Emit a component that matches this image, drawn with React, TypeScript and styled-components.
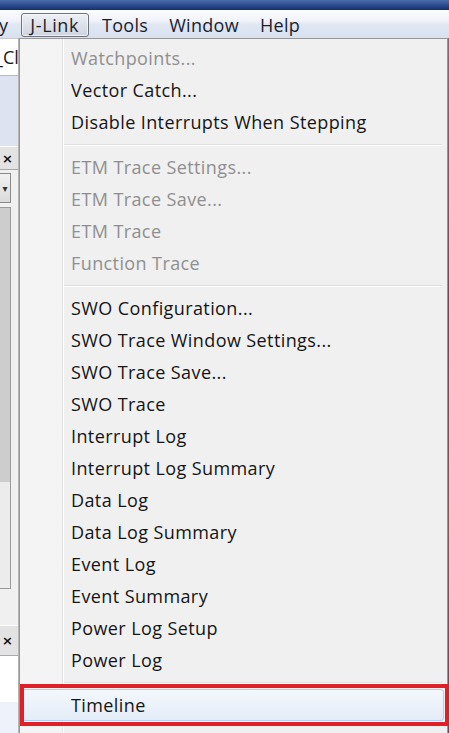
import React from "react";
import styled, { createGlobalStyle, css } from "styled-components";

const Global = createGlobalStyle`
  html, body { margin: 0; padding: 0; background: #f0f0f0; }
  body { font-family: "Open Sans", "Noto Sans", sans-serif; }
`;

const Screen = styled.div`
  width: 449px;
  height: 733px;
  overflow: hidden;
  display: flex;
  flex-direction: column;
  background: #f0f0f0;
  font-family: "Open Sans", "Noto Sans", sans-serif;
`;

const TitleStrip = styled.div`
  flex: none;
  height: 9px;
  background: linear-gradient(#4d6cab, #2a4a8c 60%, #1d3873);
`;

const MenuBar = styled.div`
  flex: none;
  box-sizing: border-box;
  height: 29px;
  padding-bottom: 1px;
  display: flex;
  align-items: flex-end;
  gap: 5px;
  border-top: 1px solid #18305f;
  background: linear-gradient(#fbfcfe 0%, #f0f3f9 38%, #e0e7f3 52%, #d9e1ef 100%);
`;

const BarItem = styled.div<{ $active?: boolean; $cut?: boolean }>`
  box-sizing: border-box;
  height: 24px;
  display: flex;
  align-items: center;
  padding: 0 7px;
  border: 1px solid transparent;
  border-radius: 3px;
  font-size: 18px;
  letter-spacing: 0.3px;
  color: #1c1d2b;
  white-space: nowrap;
  ${(p) =>
    p.$cut &&
    css`
      padding-left: 0;
      margin-left: -2px;
    `}
  ${(p) =>
    p.$active &&
    css`
      padding: 0 9px 0 8px;
      letter-spacing: 0.6px;
      border-color: #6e737d;
      background: linear-gradient(#eef1f6, #dde2ea 50%, #cfd5df);
      box-shadow: inset 0 0 0 1px rgba(255, 255, 255, 0.6);
    `}
`;

const Body = styled.div`
  flex: 1;
  min-height: 0;
  display: flex;
`;

const LeftPanel = styled.div`
  flex: none;
  box-sizing: border-box;
  width: 19px;
  display: flex;
  flex-direction: column;
  border-right: 1px solid #b4b4b4;
  background: #f0f0f0;
  overflow: hidden;
`;

const NameField = styled.div`
  flex: none;
  height: 38px;
  box-sizing: border-box;
  border-top: 1px solid #c9c9c9;
  border-bottom: 1px solid #b9b9b9;
  background: #ffffff;
  display: flex;
  align-items: center;
  font-size: 18px;
  color: #1a1a1a;
  white-space: nowrap;
  & > span {
    margin-left: -5px;
  }
`;

const Lavender = styled.div`
  flex: none;
  height: 70px;
  background: #dee3f1;
`;

const PaneHeader = styled.div<{ $h: number }>`
  flex: none;
  box-sizing: border-box;
  height: ${(p) => p.$h}px;
  display: flex;
  align-items: center;
  padding-left: 2px;
  border-top: 1px solid #ffffff;
  border-bottom: 1px solid #a9a9a9;
  background: #e3e3e3;
  font-family: "DejaVu Sans", sans-serif;
  font-weight: bold;
  font-size: 13px;
  color: #111;
`;

const Combo = styled.div`
  flex: none;
  box-sizing: border-box;
  height: 30px;
  margin-top: 3px;
  width: 11px;
  border: 1px solid #8a8a8a;
  border-left: none;
  background: linear-gradient(#f2f2f2, #dadada);
  display: flex;
  align-items: center;
  justify-content: center;
  font-size: 10px;
  color: #333;
  font-family: "DejaVu Sans", sans-serif;
`;

const ListBox = styled.div`
  flex: none;
  box-sizing: border-box;
  height: 382px;
  margin-top: 4px;
  width: 11px;
  border: 1px solid #9a9a9a;
  border-left: none;
  background: linear-gradient(#cdcdcd 0, #cdcdcd 72%, #ececec 72%);
`;

const Spacer = styled.div<{ $h: number }>`
  flex: none;
  height: ${(p) => p.$h}px;
`;

const WhiteArea = styled.div`
  flex: 1;
  background: linear-gradient(#ffffff 0, #ffffff 60%, #eef2fa 60%);
`;

const Menu = styled.div`
  flex: none;
  box-sizing: border-box;
  width: 429px;
  padding: 3px 3px 0 2px;
  border: 1px solid #979797;
  border-bottom: none;
  display: flex;
  flex-direction: column;
  background: linear-gradient(
    to right,
    #f4f4f4 0,
    #f4f4f4 42px,
    #e1e2e2 42px,
    #e1e2e2 43px,
    #ffffff 43px,
    #ffffff 44px,
    #f0f0f0 44px
  );
`;

const Item = styled.div<{ $disabled?: boolean; $hot?: boolean }>`
  position: relative;
  flex: none;
  box-sizing: border-box;
  height: 32px;
  display: flex;
  align-items: center;
  padding-left: 48px;
  border: 1px solid transparent;
  border-radius: 3px;
  font-size: 18px;
  letter-spacing: 0.4px;
  white-space: nowrap;
  color: ${(p) => (p.$disabled ? "#8f8f8f" : "#151515")};
  ${(p) =>
    p.$hot &&
    css`
      border-color: #b3d0ee;
      background: linear-gradient(#f4f8fd, #e3ecf7);
    `}
`;

const Annotation = styled.span`
  position: absolute;
  top: -6px;
  bottom: -6px;
  left: -3px;
  right: -6px;
  border: 4px solid #e01f27;
  pointer-events: none;
`;

const Separator = styled.div`
  flex: none;
  height: 13px;
  display: flex;
  align-items: center;
  padding-left: 42px;
  margin-right: 2px;
  &::before {
    content: "";
    flex: 1;
    height: 0;
    border-top: 1px solid #e0e0e0;
    border-bottom: 1px solid #ffffff;
  }
`;

const RightStrip = styled.div`
  flex: 1;
  background: linear-gradient(#6b7384, #4c5666 40%, #5e6a5c 70%, #4a5470);
`;

type Entry = { label: string; disabled?: boolean } | "sep";

const entries: Entry[] = [
  { label: "Watchpoints...", disabled: true },
  { label: "Vector Catch..." },
  { label: "Disable Interrupts When Stepping" },
  "sep",
  { label: "ETM Trace Settings...", disabled: true },
  { label: "ETM Trace Save...", disabled: true },
  { label: "ETM Trace", disabled: true },
  { label: "Function Trace", disabled: true },
  "sep",
  { label: "SWO Configuration..." },
  { label: "SWO Trace Window Settings..." },
  { label: "SWO Trace Save..." },
  { label: "SWO Trace" },
  { label: "Interrupt Log" },
  { label: "Interrupt Log Summary" },
  { label: "Data Log" },
  { label: "Data Log Summary" },
  { label: "Event Log" },
  { label: "Event Summary" },
  { label: "Power Log Setup" },
  { label: "Power Log" },
  "sep",
];

export default function App() {
  return (
    <Screen>
      <Global />
      <TitleStrip />
      <MenuBar>
        <BarItem $cut>y</BarItem>
        <BarItem $active>J-Link</BarItem>
        <BarItem>Tools</BarItem>
        <BarItem>Window</BarItem>
        <BarItem>Help</BarItem>
      </MenuBar>
      <Body>
        <LeftPanel>
          <NameField>
            <span>_Cl</span>
          </NameField>
          <Lavender />
          <PaneHeader $h={24}>×</PaneHeader>
          <Combo>▾</Combo>
          <ListBox />
          <Spacer $h={36} />
          <PaneHeader $h={31}>×</PaneHeader>
          <WhiteArea />
        </LeftPanel>
        <Menu>
          {entries.map((e, i) =>
            e === "sep" ? (
              <Separator key={i} />
            ) : (
              <Item key={i} $disabled={e.disabled}>
                {e.label}
              </Item>
            )
          )}
          <Item $hot>
            Timeline
            <Annotation />
          </Item>
        </Menu>
        <RightStrip />
      </Body>
    </Screen>
  );
}
